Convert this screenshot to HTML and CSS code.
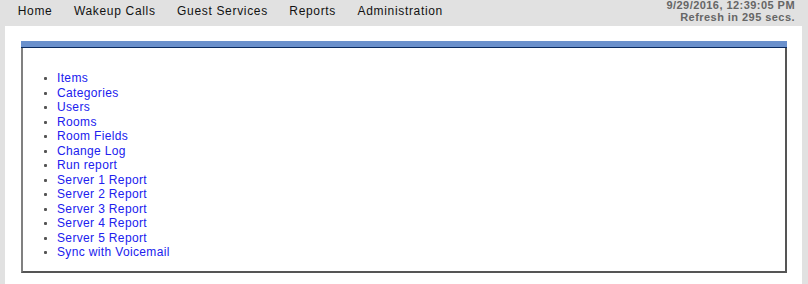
FILE: index.html
```html
<!DOCTYPE html>
<html lang="en">
<head>
    <meta charset="UTF-8">
    <title>Administration</title>
    <link rel="stylesheet" href="styles.css">
</head>
<body>
    <!--top menu-->
    <div id="topbar">
        <ul id="menu">
            <li>Home</li>
            <li>Wakeup Calls</li>
            <li>Guest Services</li>
            <li>Reports</li>
            <li>Administration</li>
        </ul>
        <div id="clock">
            <div>9/29/2016, 12:39:05 PM</div>
            <div>Refresh in 295 secs.</div>
        </div>
    </div>
    <div id="page">
        <div id="box">
            <div class="boxhead"></div>
            <ul class="links">
                <li><a href="#">Items</a></li>
                <li><a href="#">Categories</a></li>
                <li><a href="#">Users</a></li>
                <li><a href="#">Rooms</a></li>
                <li><a href="#">Room Fields</a></li>
                <li><a href="#">Change Log</a></li>
                <li><a href="#">Run report</a></li>
                <li><a href="#">Server 1 Report</a></li>
                <li><a href="#">Server 2 Report</a></li>
                <li><a href="#">Server 3 Report</a></li>
                <li><a href="#">Server 4 Report</a></li>
                <li><a href="#">Server 5 Report</a></li>
                <li><a href="#">Sync with Voicemail</a></li>
            </ul>
        </div>
    </div>
</body>
</html>
```
FILE: styles.css
```css
*{
    margin: 0;
    padding: 0;
    box-sizing: border-box;
}
body{
    background-color: #e1e1e1;
    font-family: "Liberation Sans", Arial, sans-serif;
    height: 284px;
    overflow: hidden;
}
#topbar{
    height: 26px;
    display: flex;
    justify-content: space-between;
}
#menu{
    list-style-type: none;
    display: flex;
    padding-left: 7px;
}
#menu li{
    font-size: 12px;
    letter-spacing: 0.67px;
    color: #111;
    padding: 4px 10.75px 0 10.75px;
    line-height: 15px;
}
#clock{
    text-align: right;
    font-size: 11px;
    font-weight: bold;
    letter-spacing: 0.45px;
    color: #666;
    line-height: 12px;
    padding-right: 13px;
    margin-top: -1px;
}
/*white panel*/
#page{
    background-color: white;
    margin: 0 6px 0 5px;
    padding: 15px 15px 0 16px;
    height: 258px;
}
#box{
    border-left: 2px solid #808080;
    border-right: 2px solid #555;
    border-bottom: 2px solid #555;
    height: 232px;
}
#box .boxhead{
    height: 7px;
    background-color: #6a90cc;
    border-bottom: 1px solid #0a2a60;
    margin: 0 -2px 0 -2px;
}
.links{
    list-style-type: none;
    padding: 23px 0 0 20px;
}
.links li{
    font-size: 12px;
    line-height: 14.5px;
    letter-spacing: 0.35px;
    position: relative;
    padding-left: 14px;
}
.links li:before{
    content: "";
    position: absolute;
    left: 1px;
    top: 6px;
    width: 3px;
    height: 3px;
    border-radius: 1px;
    background-color: #555;
}
.links a{
    color: #2020ee;
    text-decoration: none;
}
```
